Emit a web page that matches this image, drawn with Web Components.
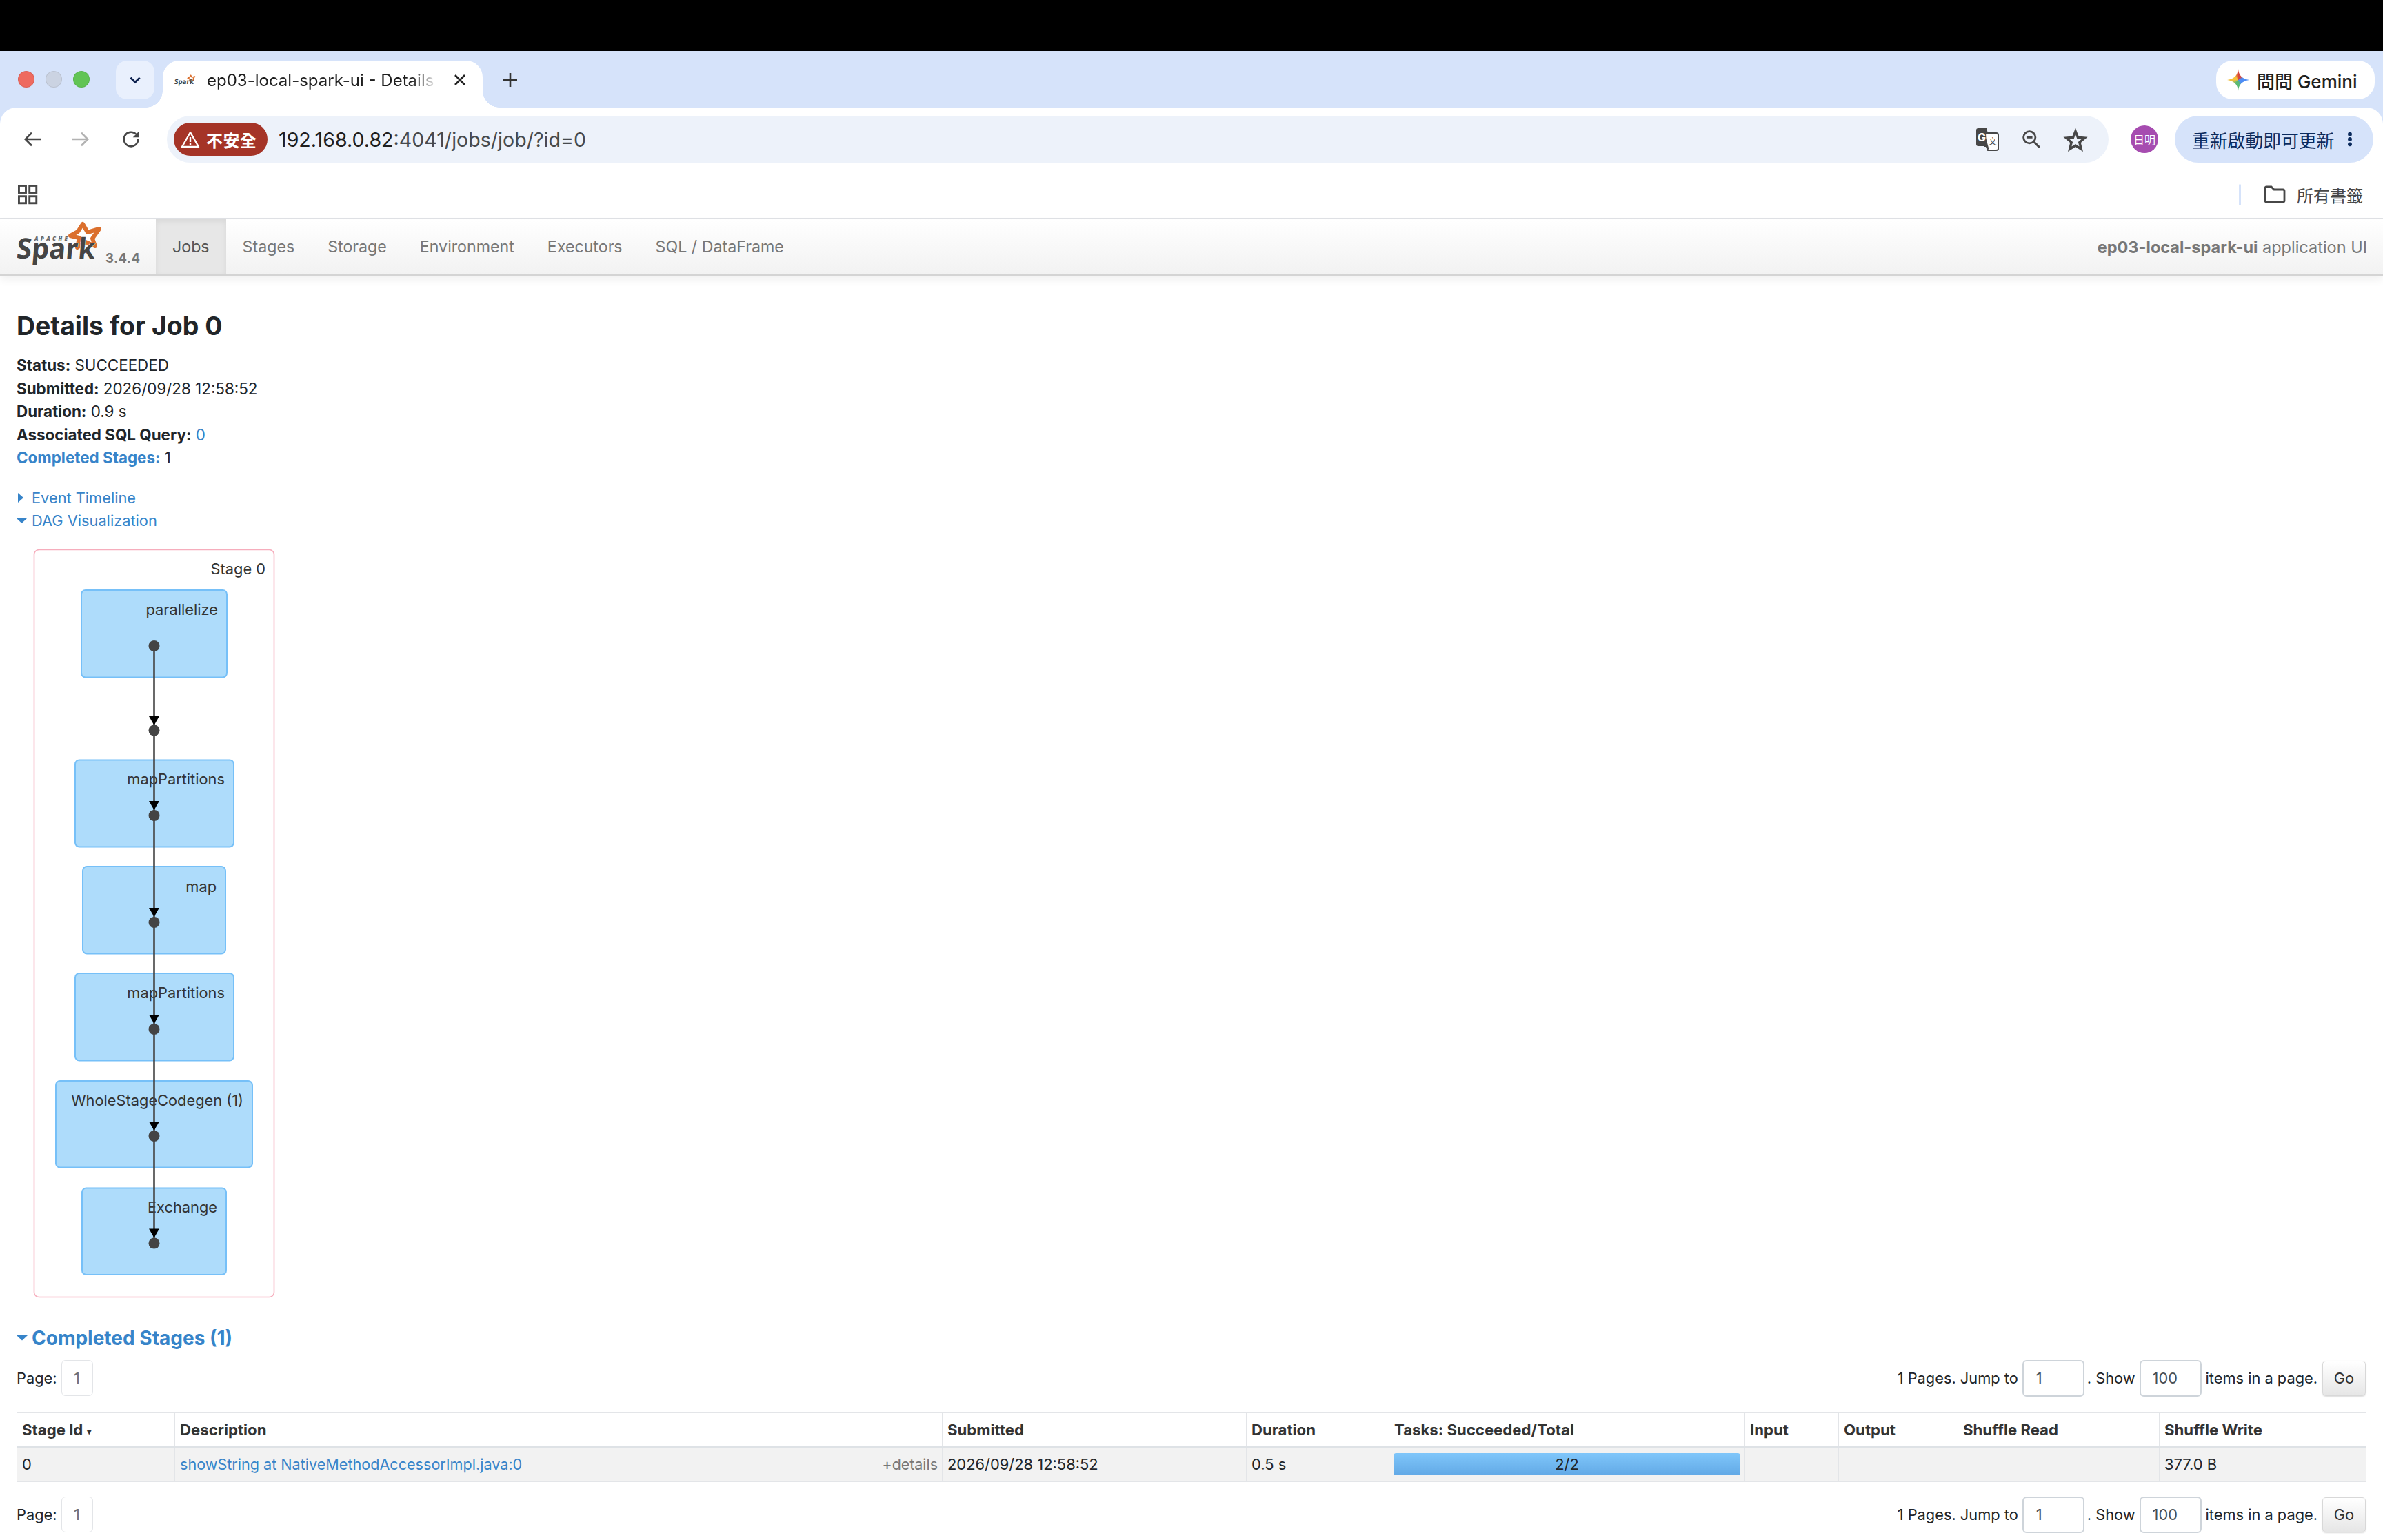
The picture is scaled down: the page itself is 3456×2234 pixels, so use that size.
<!DOCTYPE html>
<html lang="zh-Hant"><head><meta charset="utf-8"><title>ep03-local-spark-ui - Details for Job 0</title>
<style>
html,body{margin:0;padding:0;background:#fff}
body{width:3456px;height:2234px;overflow:hidden;font-family:Inter,"Noto Sans CJK TC",sans-serif;color:#212529}
</style></head><body>
<browser-frame></browser-frame>
<spark-nav></spark-nav>
<job-page></job-page>
<script>
const CJK='Inter,"Noto Sans CJK TC",sans-serif';const LINK='#3784c9';
function def(name,html){
  customElements.define(name,class extends HTMLElement{
    connectedCallback(){ if(this.shadowRoot) return; const r=this.attachShadow({mode:'open'}); r.innerHTML=typeof html==='function'?html(this):html; }
  });
}
def('spark-logo',h=>`<style>:host{display:inline-block;line-height:0}svg{display:block;overflow:visible}text{font-family:"Open Sans",sans-serif}</style>
<svg width="${h.getAttribute('w')||130}" height="${(h.getAttribute('w')||130)*66/130}" viewBox="20 320 130 66">
<path d="M120 325 127 337 144 332 134 346 138 357 124 351 112 359 115 345 102 342 113 336Z" fill="#fff" stroke="#db6f2d" stroke-width="6" stroke-linejoin="round"/>
<text transform="translate(23 375) skewX(-5)" x="0" y="0" font-size="41" font-weight="700" fill="#454545" stroke="#fff" stroke-width="1" paint-order="stroke" textLength="114" lengthAdjust="spacingAndGlyphs">Spark</text>
<text x="50" y="349" font-size="8" font-weight="800" font-style="italic" fill="#666" textLength="48" lengthAdjust="spacing">APACHE</text>
</svg>`);
def('tool-icon',h=>{const k=h.getAttribute('name'),c=h.getAttribute('color')||'#474747';
const P={back:`<path d="M24 12H3M12 3.5 3.5 12l8.5 8.5" fill="none" stroke="${c}" stroke-width="2.4"/>`,
fwd:`<path d="M0 12H21M12 3.5 20.5 12 12 20.5" fill="none" stroke="${c}" stroke-width="2.4"/>`,
reload:`<path d="M21.5 12A9.5 9.5 0 1 1 18.6 5.2" fill="none" stroke="${c}" stroke-width="2.4"/><path d="M22.5 1.5V9.5H14.5Z" fill="${c}"/>`,
plus:`<path d="M12 2V22M2 12H22" fill="none" stroke="${c}" stroke-width="2.6"/>`,
close:`<path d="M5 5 19 19M19 5 5 19" fill="none" stroke="${c}" stroke-width="2.6"/>`,
chev:`<path d="M4 8 12 16 20 8" fill="none" stroke="${c}" stroke-width="3.4"/>`,
zoom:`<circle cx="9.5" cy="9.5" r="8" fill="none" stroke="${c}" stroke-width="2.6"/><path d="M15.5 15.5 23 23" stroke="${c}" stroke-width="2.8"/><path d="M5.5 9.5H13.5" stroke="${c}" stroke-width="2.8"/>`,
star:`<path d="M12 3 14.6 9.6 22 10.2 16.4 15 18.2 22.3 12 18.4 5.8 22.3 7.6 15 2 10.2 9.4 9.6Z" fill="none" stroke="${c}" stroke-width="2.6" stroke-linejoin="miter"/>`,
kebab:`<circle cx="12" cy="4" r="3.2" fill="${c}"/><circle cx="12" cy="12" r="3.2" fill="${c}"/><circle cx="12" cy="20" r="3.2" fill="${c}"/>`,
grid:`<g fill="none" stroke="${c}" stroke-width="2.6"><rect x="1.3" y="1.3" width="9" height="9"/><rect x="15" y="1.3" width="9" height="9"/><rect x="1.3" y="15" width="9" height="9"/><rect x="15" y="15" width="9" height="9"/></g>`,
folder:`<path d="M2 7V22Q2 24 4 24H28Q30 24 30 22V8Q30 6 28 6H15L11 2H4Q2 2 2 4Z" fill="none" stroke="${c}" stroke-width="2.8"/>`,
warn:`<path d="M14 3 26 24H2Z" fill="none" stroke="#fff" stroke-width="2.4" stroke-linejoin="round"/><path d="M14 10V17M14 19V22" stroke="#fff" stroke-width="2.4"/>`,
translate:`<path d="M3 0H15L22 26H3Q0 26 0 23V3Q0 0 3 0Z" fill="${c}"/><path d="M14 7H29Q32 7 32 10V30Q32 32 29 32H17L15 27" fill="#fff" stroke="${c}" stroke-width="2"/><path d="M12 7 19 32 14 27H12Z" fill="${c}"/><text x="2" y="19" font-family="Inter,sans-serif" font-size="16" font-weight="700" fill="#fff">G</text><text x="18" y="24" font-family="'Noto Sans CJK TC',sans-serif" font-size="12" fill="${c}">文</text>`
};
const vb={folder:'0 0 32 26',warn:'0 0 28 27',translate:'0 0 33 33',grid:'0 0 26 26',zoom:'0 0 25 25'}[k]||'0 0 24 24';
return `<style>:host{display:inline-flex;line-height:0}svg{display:block;width:${h.getAttribute('size')||24}px;height:auto;overflow:visible}</style><svg viewBox="${vb}">${P[k]}</svg>`;});
def('chrome-tab',`<style>:host{display:flex;align-items:center;position:relative;width:464px;height:68px;background:#fff;border-radius:24px 24px 0 0;box-sizing:border-box;padding:0 21px 12px 16px;font-size:24px;color:#1f1f1f}
:host::before,:host::after{content:"";position:absolute;bottom:0;width:24px;height:24px}
:host::before{left:-24px;background:radial-gradient(circle at 0 0,transparent 23.5px,#fff 24px)}
:host::after{right:-24px;background:radial-gradient(circle at 100% 0,transparent 23.5px,#fff 24px)}
.t{flex:none;margin-left:16px;white-space:nowrap;-webkit-mask-image:linear-gradient(90deg,#000 90%,rgba(0,0,0,.15));mask-image:linear-gradient(90deg,#000 90%,rgba(0,0,0,.15))}
tool-icon{margin-left:auto}
</style><spark-logo w="32"></spark-logo><span class="t">ep03-local-spark-ui - Details</span><tool-icon name="close" size="24" color="#222"></tool-icon>`);
def('browser-frame',`<style>:host{display:block;background:#d6e3fa;font-family:${CJK}}
.black{height:74px;background:#000}
.strip{height:82px;display:flex;align-items:flex-start;padding:14px 12px 0 26px;box-sizing:border-box}
.dot{width:24px;height:24px;border-radius:50%;margin:15px 16px 0 0;box-sizing:border-box;border:1px solid rgba(0,0,0,.08)}
.search{width:56px;height:56px;border-radius:16px;background:#e9f0fd;display:flex;align-items:center;justify-content:center;margin-left:38px}
chrome-tab{margin-left:12px}
.plus{margin:16px 0 0 28px}
.gem{margin-left:auto;width:230px;height:56px;border-radius:24px;background:#fff;display:flex;align-items:center;padding-left:16px;box-sizing:border-box;font-size:26px;font-weight:500;color:#1f1f1f;gap:11px}
.star{width:32px;height:32px;background:conic-gradient(#d8453c 0 40deg,#4d8df5 70deg 130deg,#5bb974 170deg 215deg,#f5c13c 270deg 320deg,#d8453c 360deg);clip-path:path("M16 0Q17 14 32 16Q17 18 16 32Q15 18 0 16Q15 14 16 0Z")}
.tb{height:92px;background:#fff;border-radius:24px 24px 0 0;display:flex;align-items:center;padding:0 14px 0 10px;box-sizing:border-box}
.nb{width:72px;display:flex;justify-content:center}
.addr{margin-left:16px;width:2816px;height:68px;border-radius:34px;background:#edf2fa;display:flex;align-items:center;box-sizing:border-box;padding:0 16px 0 10px;font-size:28.6px;flex:none}
.chip{height:48px;width:136px;box-sizing:border-box;border-radius:24px;background:#a53427;color:#fff;display:flex;align-items:center;padding-left:10px;gap:9px;font-size:24px;font-weight:700;letter-spacing:.4px}
.url{margin-left:16px;color:#474a4d;white-space:nowrap}.url b{font-weight:400;color:#1f1f1f}
.ai{margin-left:auto;display:flex}.ai tool-icon{width:64px;justify-content:center}
.pf{width:40px;height:40px;border-radius:50%;background:#a64cb0;color:#fff;font-size:16px;display:flex;align-items:center;justify-content:center;margin-left:32px}
.up{margin-left:24px;width:288px;height:68px;border-radius:34px;background:#d6e3fa;color:#0b2a5c;font-size:25.8px;display:flex;align-items:center;padding-left:25px;box-sizing:border-box;gap:12px;white-space:nowrap}
.bm{height:68px;background:#fff;border-bottom:2px solid #dfe1e5;display:flex;align-items:center;padding:0 29px 0 26px;color:#474747;font-size:24px}
.sep{margin-left:auto;width:3px;height:31px;background:#d6e3fa;border-radius:2px;margin-right:33px}
.bm span{margin-left:16px}
</style>
<div class="black"></div>
<div class="strip">
<div class="dot" style="background:#ee6a5f"></div><div class="dot" style="background:#cbd3e2"></div><div class="dot" style="background:#61c454;margin-right:0"></div>
<div class="search"><tool-icon name="chev" size="20" color="#0b1f4d"></tool-icon></div>
<chrome-tab></chrome-tab>
<div class="plus"><tool-icon name="plus" size="24" color="#333"></tool-icon></div>
<div class="gem"><div class="star"></div><span>問問 Gemini</span></div>
</div>
<div class="tb">
<div class="nb"><tool-icon name="back" color="#474747" size="26"></tool-icon></div><div class="nb"><tool-icon name="fwd" color="#b2b2b2" size="26"></tool-icon></div><div class="nb"><tool-icon name="reload" color="#474747" size="26"></tool-icon></div>
<div class="addr"><div class="chip"><tool-icon name="warn" size="28"></tool-icon><span>不安全</span></div><div class="url"><b>192.168.0.82</b>:4041/jobs/job/?id=0</div>
<div class="ai"><tool-icon name="translate" size="33"></tool-icon><tool-icon name="zoom" size="27"></tool-icon><tool-icon name="star" size="32"></tool-icon></div></div>
<div class="pf">日明</div>
<div class="up"><span>重新啟動即可更新</span><tool-icon name="kebab" size="22" color="#0b2a5c"></tool-icon></div>
</div>
<div class="bm"><tool-icon name="grid" size="29"></tool-icon><div class="sep"></div><tool-icon name="folder" size="32"></tool-icon><span>所有書籤</span></div>`);
def('nav-item',`<style>:host{display:flex;align-items:center;padding:0 24px;height:80px;box-sizing:border-box;color:#777;font-size:23.2px;white-space:nowrap}
:host([active]){background:#e7e7e7;color:#555;box-shadow:inset 0 3px 8px rgba(0,0,0,.07)}</style><slot></slot>`);
def('spark-nav',`<style>:host{display:flex;align-items:stretch;height:80px;background:linear-gradient(#fff,#f2f2f2);border-bottom:2px solid #d4d4d4;box-shadow:0 6px 12px rgba(0,0,0,.06);position:relative;font-size:23.5px;padding-right:23px}
.brand{width:226px;display:flex;align-items:flex-start;flex:none;padding:2px 0 0 20px;box-sizing:border-box}
.v{margin:43px 0 0 3px;font-size:18.5px;font-weight:700;color:#777;letter-spacing:.4px}
.app{margin-left:auto;align-self:center;color:#777;white-space:nowrap}.app b{font-weight:700}
</style><div class="brand"><spark-logo w="130"></spark-logo><span class="v">3.4.4</span></div>
<nav-item active>Jobs</nav-item><nav-item>Stages</nav-item><nav-item>Storage</nav-item><nav-item>Environment</nav-item><nav-item>Executors</nav-item><nav-item>SQL / DataFrame</nav-item>
<div class="app"><b>ep03-local-spark-ui</b> application UI</div>`);
def('job-summary',`<style>:host{display:block;font-size:22.4px;line-height:33.6px;color:#212529}b{font-weight:700}a{color:${LINK};text-decoration:none}div{white-space:nowrap}</style>
<div><b>Status:</b> SUCCEEDED</div><div><b>Submitted:</b> 2026/09/28 12:58:52</div><div><b>Duration:</b> 0.9 s</div><div><b>Associated SQL Query:</b> <a>0</a></div><div><a><b>Completed Stages:</b></a> 1</div>`);
def('collapse-toggle',h=>`<style>:host{display:flex;align-items:center;height:33px;font-size:21.8px;color:${LINK}}
.tri{width:22px;display:flex;flex:none}svg{display:block}</style><span class="tri"><svg width="15" height="14" viewBox="0 0 15 14">${h.hasAttribute('open')?`<path d="M0 4H15L7.5 11Z" fill="${LINK}"/>`:`<path d="M2 0V14L10 7Z" fill="${LINK}"/>`}</svg></span><slot></slot>`);
def('dag-viz',()=>{
const nodes=[['parallelize',118,329,856,982.5,884,937,0],['mapPartitions',109,339,1102.5,1228.5,1130,1183,1],['map',120,327,1257,1383.5,1286,1338,1],['mapPartitions',109,339,1412,1538.5,1440,1493,1],['WholeStageCodegen (1)',81,366,1568,1693.5,1595.5,1648,1],['Exchange',119,328,1723.5,1849,1750.5,1803.5,1]];
let rects='',labels='',dots='',arrows=`<circle cx="223.5" cy="1059.5" r="8" fill="#444"/><path d="M216 1039H231L223.5 1052Z" fill="#000"/>`;
for(const n of nodes){rects+=`<rect x="${n[1]}" y="${n[3]}" width="${n[2]-n[1]}" height="${n[4]-n[3]}" rx="6" fill="#aedcfb" stroke="#76c0f8" stroke-width="2"/>`;
labels+=`<text x="${n[2]-13}" y="${n[5]+8}" text-anchor="end">${n[0]}</text>`;
dots+=`<circle cx="223.5" cy="${n[6]}" r="8" fill="#444"/>`;
if(n[7])arrows+=`<path d="M216 ${n[6]-21}H231L223.5 ${n[6]-8}Z" fill="#000"/>`;}
return `<style>:host{display:block;line-height:0}text{font-family:Inter,sans-serif;font-size:21.8px;fill:#333}</style>
<svg width="380" height="1088" viewBox="44 796 380 1088">
<rect x="49.5" y="797.5" width="348" height="1084" rx="7" fill="#fff" stroke="#f6adbc" stroke-width="1.6"/>
<text x="385" y="833" text-anchor="end">Stage 0</text>
${rects}${labels}<path d="M223.5 937V1803.5" stroke="#444" stroke-width="2.6"/>${dots}${arrows}</svg>`;});
def('stage-table',`<style>:host{display:block;font-size:22.2px}
table{border-collapse:collapse;table-layout:fixed;width:3407px;background:#fff}
th,td{border:1.5px solid #e3e5e8;border-top-width:2px;padding:0 0 0 7px;text-align:left;white-space:nowrap;vertical-align:middle}
th{height:48px;font-weight:700;color:#333;border-bottom:3px solid #dee2e6}
td{height:47px;background:#f2f2f2;color:#212529;font-size:21.9px;border-bottom-width:2px}
a{color:${LINK};font-size:21.6px}.d{float:right;color:#777;padding-right:6px;font-size:21.4px}
.bar{height:32px;margin-right:6px;margin-left:-1px;border-radius:4px;background:linear-gradient(#7fc6fa,#62a9e6);display:flex;align-items:center;justify-content:center;color:#212529}
.s{font-size:13px;vertical-align:1px}
</style><table><colgroup><col style="width:229px"><col style="width:1113px"><col style="width:441px"><col style="width:207px"><col style="width:516px"><col style="width:136px"><col style="width:173px"><col style="width:292px"><col style="width:300px"></colgroup>
<thead><tr><th>Stage Id <span class="s">▾</span></th><th>Description</th><th>Submitted</th><th>Duration</th><th>Tasks: Succeeded/Total</th><th>Input</th><th>Output</th><th>Shuffle Read</th><th>Shuffle Write</th></tr></thead>
<tbody><tr><td>0</td><td><a>showString at NativeMethodAccessorImpl.java:0</a><span class="d">+details</span></td><td>2026/09/28 12:58:52</td><td>0.5 s</td><td><div class="bar">2/2</div></td><td></td><td></td><td></td><td>377.0 B</td></tr></tbody></table>`);
def('page-bar',`<style>:host{display:flex;align-items:center;height:53px;font-size:21.8px;color:#212529;white-space:nowrap}
.p{margin-left:6px;width:46px;height:52px;box-sizing:border-box;border:1.5px solid #e3e5e8;border-radius:6px;display:flex;align-items:center;justify-content:center;color:#6c6f73}
.r{margin-left:auto;display:flex;align-items:center}
.i{height:53px;box-sizing:border-box;border:2px solid #ced4da;border-radius:6px;background:#fff;display:flex;align-items:center;color:#495057;width:90px;margin:0 6px}
.go{height:51px;width:63px;box-sizing:border-box;border:1.5px solid #d8d8d8;border-radius:5px;background:linear-gradient(#fff,#e6e6e6);box-shadow:0 1px 2px rgba(0,0,0,.15);display:flex;align-items:center;justify-content:center;color:#333;margin-left:7px}
</style><span>Page:</span><div class="p">1</div><div class="r"><span>1 Pages. Jump to</span><div class="i" style="padding-left:18px;margin-right:4px">1</div><span>. Show</span><div class="i" style="padding-left:17px">100</div><span>items in a page.</span><div class="go">Go</div></div>`);
def('job-page',`<style>:host{display:block;padding:0 25px 0 24px;width:3407px}
h3{margin:48px 0 15px;font-size:37.4px;line-height:50px;font-weight:700;color:#212529}
.tg{margin-top:25px}
dag-viz{margin:24px 0 0 20px}
h4{margin:37px 0 12px;font-size:28px;line-height:40px;font-weight:700;color:${LINK};display:flex;align-items:center}
h4 svg{margin-right:6px}
stage-table{margin:22px 0 21px}
</style><h3>Details for Job 0</h3><job-summary></job-summary>
<div class="tg"><collapse-toggle>Event Timeline</collapse-toggle><collapse-toggle open>DAG Visualization</collapse-toggle></div>
<dag-viz></dag-viz>
<h4><svg width="16" height="14" viewBox="0 0 16 14"><path d="M0 3H16L8 10.5Z" fill="${LINK}"/></svg>Completed Stages (1)</h4>
<page-bar></page-bar><stage-table></stage-table><page-bar></page-bar>`);
</script></body></html>
